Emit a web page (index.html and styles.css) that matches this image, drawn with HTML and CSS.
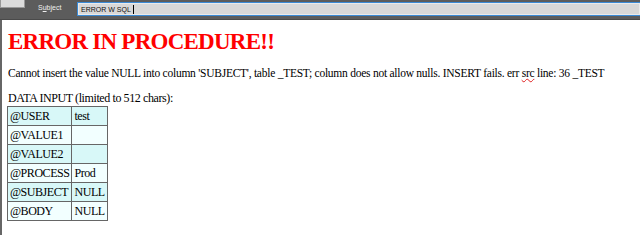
FILE: index.html
```html
<!DOCTYPE html>
<html lang="en">
<head>
    <meta charset="UTF-8">
    <title>ERROR W SQL</title>
    <link rel="stylesheet" href="styles.css">
</head>
<body>
    <div class="mail-bar">
        <div class="tab-stub"></div>
        <div class="field-label">S<u>u</u>bject</div>
        <div class="subject-box">ERROR W SQL<span class="caret"></span></div>
    </div>
    <div class="message">
        <h1 class="error-title">ERROR IN PROCEDURE!!</h1>
        <p class="error-text">Cannot insert the value NULL into column 'SUBJECT', table _TEST; column does not allow nulls. INSERT fails. err <span class="spell">src</span> line: 36 _TEST</p>
        <div class="data-label">DATA INPUT (limited to 512 chars):</div>
        <table class="data-table">
            <tr class="odd"><td>@USER</td><td>test</td></tr>
            <tr class="even"><td>@VALUE1</td><td></td></tr>
            <tr class="odd"><td>@VALUE2</td><td></td></tr>
            <tr class="even"><td>@PROCESS</td><td>Prod</td></tr>
            <tr class="odd"><td>@SUBJECT</td><td>NULL</td></tr>
            <tr class="even"><td>@BODY</td><td>NULL</td></tr>
        </table>
    </div>
</body>
</html>
```

FILE: styles.css
```css
* {
    margin: 0;
    padding: 0;
    box-sizing: border-box;
}
body {
    background: #fff;
    font-family: "Liberation Serif", "Times New Roman", serif;
    width: 640px;
    height: 235px;
    overflow: hidden;
}
.mail-bar {
    height: 20px;
    background: #5c5c5c;
    display: flex;
    align-items: flex-start;
    border-bottom: 1px solid #4a4a4a;
}
.tab-stub {
    width: 25px;
    height: 8px;
    background: #dcdcdc;
    border: 1px solid #999;
    border-top: none;
}
.field-label {
    font-family: "Liberation Sans", Arial, sans-serif;
    font-size: 7px;
    color: #f0f0f0;
    margin: 4px 0 0 13px;
    width: 39px;
}
.subject-box {
    flex: 1;
    height: 14px;
    margin-top: 2px;
    background: #d8d8d8;
    border: 1px solid #3a8ad6;
    border-right: none;
    box-shadow: inset 0 0 0 1px #eaeaea;
    font-family: "Liberation Sans", Arial, sans-serif;
    font-size: 7px;
    color: #111;
    padding: 0 0 0 3px;
    display: flex;
    align-items: center;
}
.caret {
    display: inline-block;
    width: 1px;
    height: 9px;
    background: #000;
    margin-left: 2px;
}
.message {
    border-left: 2px solid #666;
    height: 215px;
    padding: 7px 0 0 6px;
}
.error-title {
    color: #ff0000;
    font-size: 23px;
    letter-spacing: -0.75px;
    font-weight: bold;
    line-height: 30px;
}
.error-text {
    font-size: 11.5px;
    letter-spacing: -0.25px;
    margin-top: 8px;
    line-height: 16px;
    white-space: nowrap;
}
.spell {
    text-decoration: underline wavy #e02020;
    text-decoration-thickness: 1px;
}
.data-label {
    font-size: 12px;
    letter-spacing: -0.4px;
    margin-top: 10px;
    line-height: 15px;
}
.data-table {
    border-collapse: collapse;
    border: 1px solid #555;
    font-size: 12px;
    letter-spacing: -0.45px;
    margin-left: -1px;
}
.data-table td {
    border: 1px solid #666;
    height: 19px;
    padding: 0 2px 0 2px;
    line-height: 16px;
}
.data-table td:first-child {
    width: 62px;
}
.data-table td:last-child {
    width: 36px;
}
.data-table tr.odd td {
    background: #d8f8f8;
}
.data-table tr.even td {
    background: #f2ffff;
}
```
